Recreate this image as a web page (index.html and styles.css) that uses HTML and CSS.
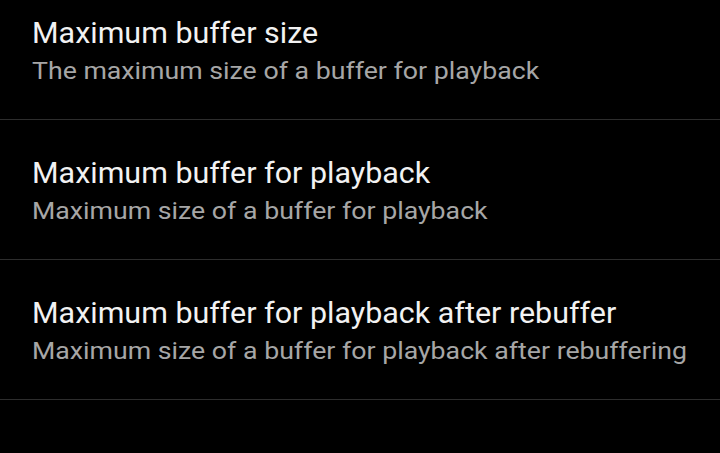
FILE: index.html
```html
<!DOCTYPE html>
<html>
<head>
  <meta charset="utf-8">
  <meta name="viewport" content="width=device-width">
  <title>Buffer settings</title>
  <link rel="stylesheet" href="styles.css">
</head>
<body>
<div class="prefs">
  <div class="pref">
    <div class="pref-title">Maximum buffer size</div>
    <div class="pref-summary">The maximum size of a buffer for playback</div>
  </div>
  <div class="pref">
    <div class="pref-title">Maximum buffer for playback</div>
    <div class="pref-summary">Maximum size of a buffer for playback</div>
  </div>
  <div class="pref">
    <div class="pref-title">Maximum buffer for playback after rebuffer</div>
    <div class="pref-summary">Maximum size of a buffer for playback after rebuffering</div>
  </div>
</div>
</body>
</html>
```

FILE: styles.css
```css
html, body {
  margin: 0;
  background: #000;
  height: 100%;
  overflow: hidden;
}
.prefs {
  margin-top: -20px;
  font-family: Roboto, "Noto Sans", sans-serif;
}
.pref {
  box-sizing: border-box;
  height: 140px;
  padding: 35px 32px 0;
  border-bottom: 1px solid #2d2d2d;
}
.pref-title,
.pref-summary {
  white-space: nowrap;
  transform-origin: left center;
}
.pref-title {
  font-size: 29px;
  line-height: 37px;
  color: #f2f2f2;
  transform: scaleX(1.05);
}
.pref-summary {
  font-size: 24.5px;
  line-height: 38px;
  color: #a6a6a6;
  transform: scaleX(1.09);
}
```
